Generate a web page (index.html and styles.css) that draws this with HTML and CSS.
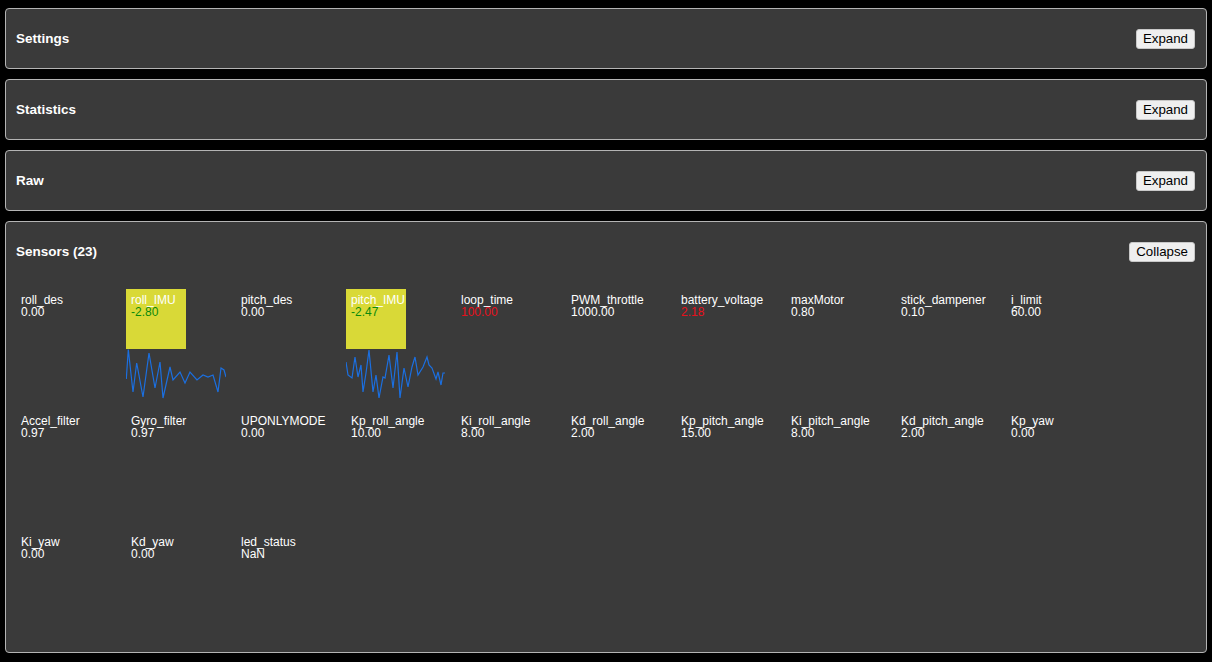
FILE: index.html
```html
<!DOCTYPE html>
<html>
<head>
<meta charset="utf-8">
<link rel="stylesheet" href="styles.css">
</head>
<body>
<div class="panel">
  <div class="header"><span class="title">Settings</span><button class="btn">Expand</button></div>
</div>
<div class="panel">
  <div class="header"><span class="title">Statistics</span><button class="btn">Expand</button></div>
</div>
<div class="panel">
  <div class="header"><span class="title">Raw</span><button class="btn">Expand</button></div>
</div>
<div class="panel">
  <div class="header"><span class="title">Sensors (23)</span><button class="btn">Collapse</button></div>
  <div class="grid">
    <div class="cell"><div class="box"><div>roll_des</div><div>0.00</div></div></div>
    <div class="cell"><div class="box hl"><div>roll_IMU</div><div class="good">-2.80</div></div>
      <svg class="spark" width="100" height="51" viewBox="0 0 100 51"><polyline fill="none" stroke="#1b6fe0" stroke-width="1.2" points="0.3,30 2.3,0.5 7,43 10.7,14 17,48 23,4 29,39 34,13 37,49 44,18 47,31 54,23 59,34 64,23 71,31 77,26 82,28 87,26 92,43 95,19 98,21 100,28"/></svg>
    </div>
    <div class="cell"><div class="box"><div>pitch_des</div><div>0.00</div></div></div>
    <div class="cell"><div class="box hl"><div>pitch_IMU</div><div class="good">-2.47</div></div>
      <svg class="spark" width="100" height="51" viewBox="0 0 100 51"><polyline fill="none" stroke="#1b6fe0" stroke-width="1.2" points="0,13 2,26 6,29 9,8 12,28 15,16 17,43 20,24 23,1 27,43 30,26 33,49 37,28 39,29 43,6 47,39 51,3 54,49 58,19 62,38 66,18 69,8 72,26 77,18 81,8 83,16 86,19 90,30 92,23 95,36 97,24 99,24"/></svg>
    </div>
    <div class="cell"><div class="box"><div>loop_time</div><div class="bad">100.00</div></div></div>
    <div class="cell"><div class="box"><div>PWM_throttle</div><div>1000.00</div></div></div>
    <div class="cell"><div class="box"><div>battery_voltage</div><div class="bad">2.18</div></div></div>
    <div class="cell"><div class="box"><div>maxMotor</div><div>0.80</div></div></div>
    <div class="cell"><div class="box"><div>stick_dampener</div><div>0.10</div></div></div>
    <div class="cell"><div class="box"><div>i_limit</div><div>60.00</div></div></div>
    <div class="cell"><div class="box"><div>Accel_filter</div><div>0.97</div></div></div>
    <div class="cell"><div class="box"><div>Gyro_filter</div><div>0.97</div></div></div>
    <div class="cell"><div class="box"><div>UPONLYMODE</div><div>0.00</div></div></div>
    <div class="cell"><div class="box"><div>Kp_roll_angle</div><div>10.00</div></div></div>
    <div class="cell"><div class="box"><div>Ki_roll_angle</div><div>8.00</div></div></div>
    <div class="cell"><div class="box"><div>Kd_roll_angle</div><div>2.00</div></div></div>
    <div class="cell"><div class="box"><div>Kp_pitch_angle</div><div>15.00</div></div></div>
    <div class="cell"><div class="box"><div>Ki_pitch_angle</div><div>8.00</div></div></div>
    <div class="cell"><div class="box"><div>Kd_pitch_angle</div><div>2.00</div></div></div>
    <div class="cell"><div class="box"><div>Kp_yaw</div><div>0.00</div></div></div>
    <div class="cell"><div class="box"><div>Ki_yaw</div><div>0.00</div></div></div>
    <div class="cell"><div class="box"><div>Kd_yaw</div><div>0.00</div></div></div>
    <div class="cell"><div class="box"><div>led_status</div><div>NaN</div></div></div>
  </div>
</div>
</body>
</html>
```

FILE: styles.css
```css
html, body {
  background: #000;
}
body {
  margin: 8px 5px;
  font-family: "Liberation Sans", Arial, sans-serif;
  color: #fff;
}
.panel {
  background: #3a3a3a;
  border: 1px solid #b4b4b4;
  border-radius: 4px;
  padding: 10px 11px 10px 10px;
  margin-bottom: 10px;
}
.header {
  height: 39px;
  display: flex;
  align-items: center;
  justify-content: space-between;
}
.title {
  font-weight: bold;
  font-size: 13.5px;
}
.btn {
  font-family: "Liberation Sans", Arial, sans-serif;
  font-size: 13.3px;
  color: #000;
  background: #efefef;
  border: 1px solid #c8c8c8;
  border-radius: 3px;
  padding: 1px 6px;
  height: 20px;
  line-height: 16px;
  margin-top: 1px;
}
.grid {
  margin-top: 18px;
  display: flex;
  flex-wrap: wrap;
  column-gap: 10px;
  row-gap: 10px;
}
.cell {
  width: 100px;
  height: 111px;
}
.box {
  width: 50px;
  height: 50px;
  padding: 5px;
  font-size: 12px;
  line-height: 12px;
  white-space: nowrap;
}
.box.hl {
  background: #d9d937;
}
.good {
  color: #0b8a0b;
}
.bad {
  color: #e8101c;
}
.spark {
  display: block;
}
```
